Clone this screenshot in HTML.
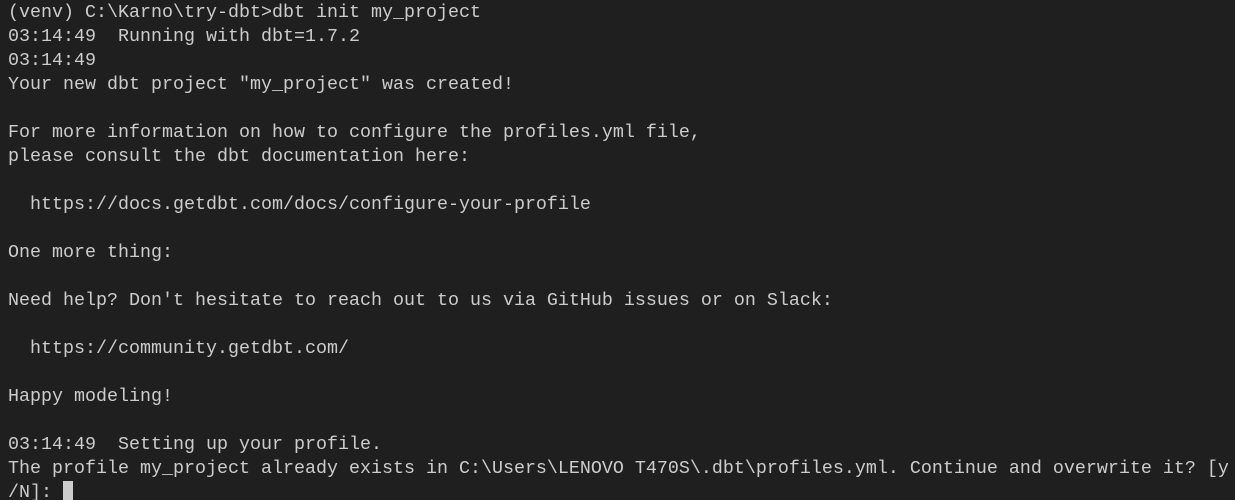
<!DOCTYPE html>
<html><head><meta charset="utf-8"><style>
html,body{margin:0;padding:0;background:#1f1f1f;width:1235px;height:500px;overflow:hidden}
pre{margin:0;padding:1px 0 0 8px;font-family:"Liberation Mono",monospace;font-size:18.33px;line-height:24px;color:#cccccc;white-space:pre}
.cur{display:inline-block;width:10px;height:20px;background:#cccccc;vertical-align:-4px}
</style></head><body><pre>(venv) C:\Karno\try-dbt&gt;dbt init my_project
03:14:49  Running with dbt=1.7.2
03:14:49
Your new dbt project "my_project" was created!

For more information on how to configure the profiles.yml file,
please consult the dbt documentation here:

  https://docs.getdbt.com/docs/configure-your-profile

One more thing:

Need help? Don't hesitate to reach out to us via GitHub issues or on Slack:

  https://community.getdbt.com/

Happy modeling!

03:14:49  Setting up your profile.
The profile my_project already exists in C:\Users\LENOVO T470S\.dbt\profiles.yml. Continue and overwrite it? [y
/N]: <span class="cur"></span></pre></body></html>
